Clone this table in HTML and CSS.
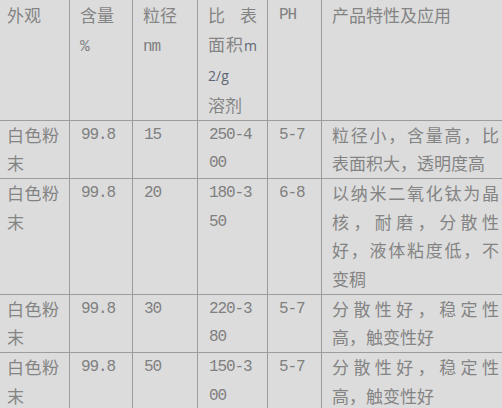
FILE: index.html
```html
<!DOCTYPE html>
<html lang="zh">
<head>
<meta charset="utf-8">
<link rel="stylesheet" href="styles.css">
</head>
<body>
<table class="spec">
  <colgroup>
    <col class="c1"><col class="c2"><col class="c3"><col class="c4"><col class="c5"><col class="c6">
  </colgroup>
  <tr class="head">
    <td class="first">外观</td>
    <td>含量<br><span class="num">%</span></td>
    <td>粒径<br><span class="num">nm</span></td>
    <td>比表面积<span class="unit">m2/g</span><br>溶剂</td>
    <td class="num">PH</td>
    <td class="last">产品特性及应用</td>
  </tr>
  <tr>
    <td class="first">白色粉末</td>
    <td class="num">99.8</td>
    <td class="num">15</td>
    <td class="num">250-400</td>
    <td class="num">5-7</td>
    <td class="last">粒径小，含量高，比表面积大，透明度高</td>
  </tr>
  <tr>
    <td class="first">白色粉末</td>
    <td class="num">99.8</td>
    <td class="num">20</td>
    <td class="num">180-350</td>
    <td class="num">6-8</td>
    <td class="last">以纳米二氧化钛为晶核，耐磨，分散性好，液体粘度低，不变稠</td>
  </tr>
  <tr>
    <td class="first">白色粉末</td>
    <td class="num">99.8</td>
    <td class="num">30</td>
    <td class="num">220-380</td>
    <td class="num">5-7</td>
    <td class="last">分散性好，稳定性高，触变性好</td>
  </tr>
  <tr>
    <td class="first">白色粉末</td>
    <td class="num">99.8</td>
    <td class="num">50</td>
    <td class="num">150-300</td>
    <td class="num">5-7</td>
    <td class="last">分散性好，稳定性高，触变性好</td>
  </tr>
</table>
</body>
</html>
```

FILE: styles.css
```css
html, body {
  margin: 0;
  padding: 0;
  background: #dcdcdc;
  overflow: hidden;
}

.spec {
  border-collapse: separate;
  border-spacing: 0;
  table-layout: fixed;
  width: 510px;
  font-family: "Noto Sans CJK SC", "Liberation Sans", sans-serif;
  font-size: 17px;
  line-height: 28.65px;
  color: #848484;
}

.c1 { width: 70px; }
.c2 { width: 63px; }
.c3 { width: 65px; }
.c4 { width: 70px; }
.c5 { width: 54px; }
.c6 { width: 188px; }

.spec td {
  box-sizing: border-box;
  vertical-align: top;
  padding: 0 10px 0 10px;
  border-right: 1px solid #9c9c9c;
  border-bottom: 1px solid #9c9c9c;
  text-align: justify;
  word-break: break-all;
}

.spec .head td {
  padding-top: 1px;
}

.spec td.first {
  padding-left: 7px;
}

.spec .num {
  font-family: "Liberation Mono", "DejaVu Sans Mono", monospace;
  font-size: 16px;
  letter-spacing: -1.1px;
  color: #808080;
}

.spec td.num {
  padding-left: 11px;
}

.unit {
  font-family: "Open Sans", "Liberation Sans", sans-serif;
  color: #5f6675;
  font-size: 14px;
}
```
